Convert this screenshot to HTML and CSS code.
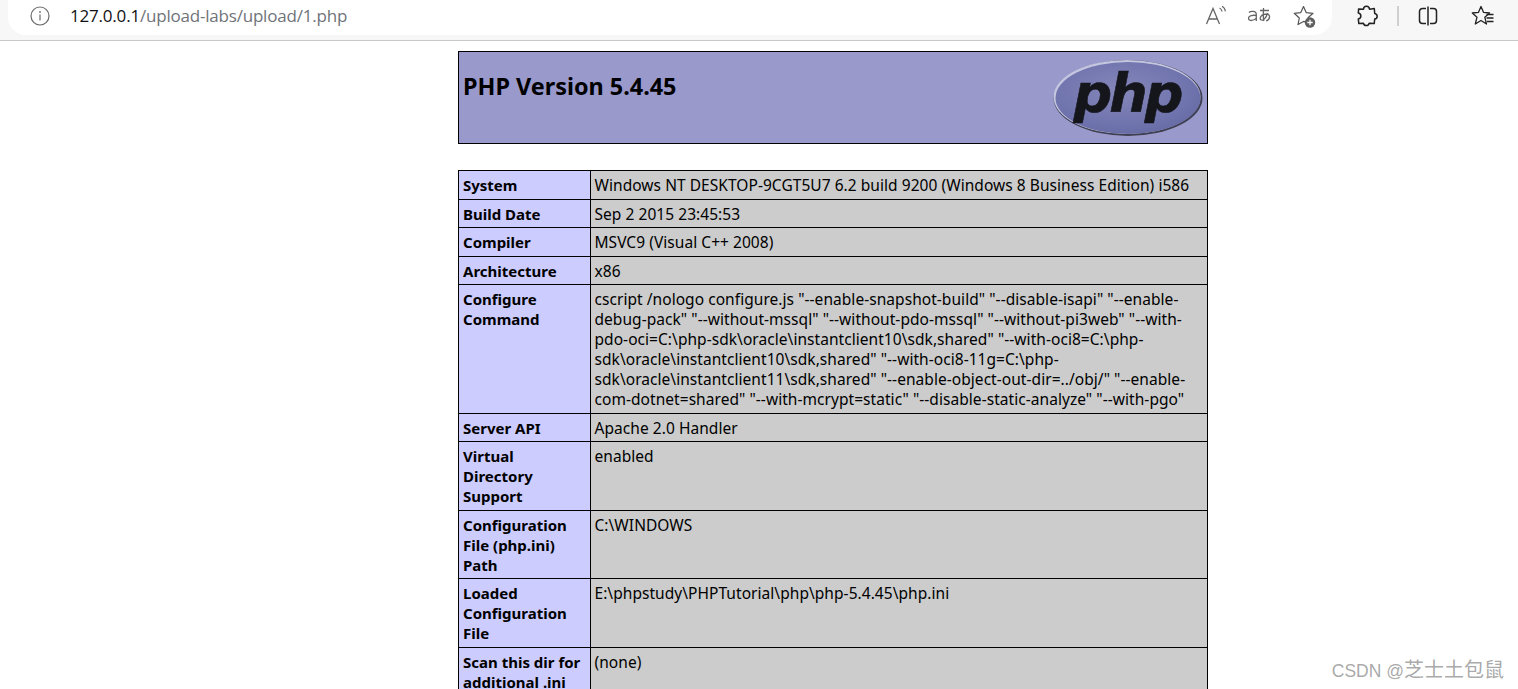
FILE: index.html
```html
<!DOCTYPE html>
<html lang="en">
<head>
<meta charset="utf-8">
<title>phpinfo()</title>
<link rel="stylesheet" href="styles.css">
</head>
<body>
<header class="toolbar">
  <div class="address">
    <svg class="info" viewBox="0 0 20 20" width="20" height="20"><circle cx="10" cy="10" r="9" fill="none" stroke="#6b6b6b" stroke-width="1.2"/><path d="M10 8.6v6" stroke="#6b6b6b" stroke-width="1.2"/><circle cx="10" cy="6" r=".9" fill="#6b6b6b"/></svg>
    <span class="url"><span class="host">127.0.0.1</span>/upload-labs/upload/1.php</span>
    <span class="addr-icons">
      <svg viewBox="0 0 24 24" width="24" height="24" fill="none" stroke="#666" stroke-width="1.3"><path d="M2.500 20 9 4.500 15.500 20M4.800 15h8.400"/><path d="M15.500 4c1.600.8 2.400 2 2.600 3.600M18 2.200c2 1 3.200 3 3.400 5.200" stroke-width="1.100"/></svg>
      <svg viewBox="0 0 24 24" width="24" height="24" fill="none" stroke="#666" stroke-width="1.300"><path d="M1 8.500c1.500-1.600 7-2 7.300 1.500v7M8.300 11.500c-3.300-.7-7.800 0-7.800 2.800 0 3 5.700 2.900 7.800-.3"/><path d="M12 6.500h9M15.500 4c0 4.500-.6 9 .3 13M19.500 9c-1.200 5-4.500 8-6.600 6.800-1.800-1.200 0-5.800 5.800-5.800 4.300.2 3.500 6-.6 6.800"/></svg>
      <svg viewBox="0 0 24 24" width="24" height="24" fill="none"><path d="M11.500 2.500 14.200 8.600 21 9.300 16 13.800 17 19 11.500 17.400 6 20.600 7.300 14 2.200 9.300 8.800 8.600Z" stroke="#555" stroke-width="1.200" stroke-linejoin="round"/><circle cx="18" cy="18.500" r="5.200" fill="#5f5f5f"/><path d="M18 15.800v5.400M15.300 18.500h5.400" stroke="#fff" stroke-width="1.300"/></svg>
    </span>
  </div>
  <div class="browser-icons">
    <svg class="puzzle" viewBox="0 0 24 24" width="24" height="24" fill="none" stroke="#222" stroke-width="1.500" stroke-linejoin="round"><path d="M8.500 5.200c.2-3.800 5.600-4 6 0l4.800-.6.400 4.800c3.300.6 3.300 5.200 0 5.700l-.5 4.500-5-.4c-.9 3.200-5 3.200-5.800 0l-4.600.4-.5-4.700c3.400-.7 3.400-5.300 0-5.800L3.600 4.900Z"/></svg>
    <span class="sep"></span>
    <svg class="split" viewBox="0 0 24 24" width="24" height="24" fill="none" stroke="#222" stroke-width="1.500"><path d="M12 2.500v19M10 4.500H6.500a3 3 0 0 0-3 3v9a3 3 0 0 0 3 3H10M14 4.500h3.500a3 3 0 0 1 3 3v9a3 3 0 0 1-3 3H14"/></svg>
    <svg class="fav" viewBox="0 0 24 24" width="24" height="24" fill="none" stroke="#222" stroke-width="1.300"><path d="M10 2.500 12.500 8.300 18.500 9 13.800 13.200 15.500 20 10 16.500 4.300 20 6 13.200 1.300 9 7.500 8.300Z" stroke-linejoin="round"/><path d="M15.500 10.500h7M15.500 14h7M16 17.500h6.500"/></svg>
  </div>
</header>
<main class="center">
  <table class="head">
    <tr><td class="h">
      <div class="head-inner">
        <h1>PHP Version 5.4.45</h1>
        <svg class="logo" viewBox="0 0 150 80" width="150" height="80">
          <defs>
            <radialGradient id="g" cx=".45" cy=".4" r=".7"><stop offset="0" stop-color="#8587b9"/><stop offset=".7" stop-color="#6f73ad"/><stop offset="1" stop-color="#6367a0"/></radialGradient>
          </defs>
          <ellipse cx="75" cy="40" rx="74.500" ry="38" fill="#3f3f52"/>
          <ellipse cx="74" cy="39" rx="73.500" ry="37" fill="#c5c7e0"/>
          <ellipse cx="75" cy="40" rx="72.500" ry="36" fill="url(#g)"/>
          <text class="logo-text" x="74" y="54" text-anchor="middle">php</text>
        </svg>
      </div>
    </td></tr>
  </table>
  <table class="info-table">
    <tr><td class="e">System</td><td class="v">Windows NT DESKTOP-9CGT5U7 6.2 build 9200 (Windows 8 Business Edition) i586</td></tr>
    <tr><td class="e">Build Date</td><td class="v">Sep 2 2015 23:45:53</td></tr>
    <tr><td class="e">Compiler</td><td class="v">MSVC9 (Visual C++ 2008)</td></tr>
    <tr><td class="e">Architecture</td><td class="v">x86</td></tr>
    <tr><td class="e">Configure Command</td><td class="v">cscript /nologo configure.js "--enable-snapshot-build" "--disable-isapi" "--enable-debug-pack" "--without-mssql" "--without-pdo-mssql" "--without-pi3web" "--with-pdo-oci=C:\php-sdk\oracle\instantclient10\sdk,shared" "--with-oci8=C:\php-sdk\oracle\instantclient10\sdk,shared" "--with-oci8-11g=C:\php-sdk\oracle\instantclient11\sdk,shared" "--enable-object-out-dir=../obj/" "--enable-com-dotnet=shared" "--with-mcrypt=static" "--disable-static-analyze" "--with-pgo"</td></tr>
    <tr><td class="e">Server API</td><td class="v">Apache 2.0 Handler</td></tr>
    <tr><td class="e">Virtual Directory Support</td><td class="v">enabled</td></tr>
    <tr><td class="e">Configuration File (php.ini) Path</td><td class="v">C:\WINDOWS</td></tr>
    <tr><td class="e">Loaded Configuration File</td><td class="v">E:\phpstudy\PHPTutorial\php\php-5.4.45\php.ini</td></tr>
    <tr><td class="e">Scan this dir for additional .ini files</td><td class="v">(none)</td></tr>
  </table>
</main>
<div class="watermark">CSDN @<span class="wm-cjk">芝士土包鼠</span></div>
</body>
</html>
```
FILE: styles.css
```css
html, body {
  margin: 0;
  padding: 0;
  height: 689px;
  overflow: hidden;
  background: #fff;
}
body {
  font-family: "Noto Sans", sans-serif;
  font-size: 15.5px;
  line-height: 20px;
  color: #000;
}
.toolbar {
  display: flex;
  align-items: flex-start;
  height: 40px;
  background: #f7f7f7;
  border-bottom: 1px solid #c9c9c9;
}
.address {
  display: flex;
  align-items: center;
  width: 1324px;
  height: 35px;
  margin-left: 8px;
  padding: 0 16px 4px 22px;
  box-sizing: border-box;
  background: #fff;
  border-radius: 0 0 18px 18px;
}
.info { flex: none; }
.url {
  margin-left: 20px;
  font-family: "Open Sans", sans-serif;
  font-size: 17px;
  letter-spacing: -.2px;
  color: #6f7378;
  flex: 1;
}
.host { color: #111; }
.addr-icons {
  display: flex;
  align-items: center;
  gap: 20px;
}
.browser-icons {
  display: flex;
  align-items: center;
  height: 31px;
  margin-left: 23px;
}
.sep {
  width: 2px;
  height: 20px;
  background: #d0d0d0;
  margin-left: 18px;
}
.split { margin-left: 17px; }
.fav { margin-left: 31px; }
.center {
  width: 750px;
  margin: 10px 0 0 458px;
}
table {
  width: 750px;
  border-collapse: collapse;
  table-layout: fixed;
}
td {
  border: 1px solid #000;
  padding: 4.25px 4px 3.25px;
  vertical-align: top;
}
.h {
  background: #9999cc;
  height: 92px;
  box-sizing: border-box;
  padding: 0 4px;
}
.head-inner {
  display: flex;
  justify-content: space-between;
}
h1 {
  margin: 0;
  padding-top: 18px;
  font-size: 23.4px;
  line-height: 32px;
  font-weight: bold;
}
.logo {
  margin: 6px 0 0 0;
  flex: none;
}
.logo-text {
  font-family: "DejaVu Sans", sans-serif;
  font-style: italic;
  font-weight: bold;
  font-size: 54px;
  letter-spacing: -3px;
  fill: #15151c;
  stroke: #15151c;
  stroke-width: .6px;
}
.info-table {
  margin-top: 26px;
}
.e {
  width: 132px;
  box-sizing: border-box;
  background: #ccccff;
  font-size: 15px;
  font-weight: bold;
}
.v {
  background: #cccccc;
  padding-left: 3.5px;
  letter-spacing: .05px;
}
.watermark {
  position: absolute;
  right: 14px;
  top: 658px;
  font-family: "Liberation Sans", "Noto Sans CJK SC", sans-serif;
  font-size: 17.5px;
  line-height: 24px;
  color: rgba(120,120,120,.65);
}
.wm-cjk {
  font-size: 20px;
}
```
